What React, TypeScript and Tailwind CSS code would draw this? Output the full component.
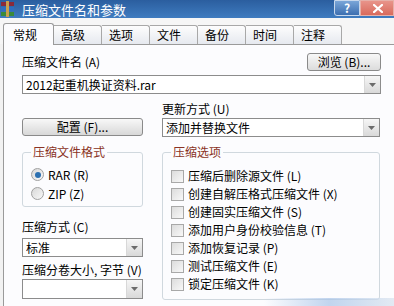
import React from 'react';

const tabs = ['常规', '高级', '选项', '文件', '备份', '时间', '注释'];

const options = [
    '压缩后删除源文件 (L)',
    '创建自解压格式压缩文件 (X)',
    '创建固实压缩文件 (S)',
    '添加用户身份校验信息 (T)',
    '添加恢复记录 (P)',
    '测试压缩文件 (E)',
    '锁定压缩文件 (K)'
];

function DropArrow() {
    return (
        <div className="flex h-full w-[16px] items-center justify-center border-l border-[#d8d8d8] bg-gradient-to-b from-[#f6f6f6] to-[#d9d9d9]">
            <svg width="7" height="4" viewBox="0 0 7 4">
                <path d="M0 0h7L3.5 4z" fill="#6b6b6b" />
            </svg>
        </div>
    );
}

function Combo({ value, className }: { value: string; className: string }) {
    return (
        <div className={`flex items-center border border-[#8c8c8c] bg-white pl-[3px] ${className}`}>
            <span className="flex-1 truncate text-[12px] text-black">{value}</span>
            <DropArrow />
        </div>
    );
}

function Check({ label }: { label: string }) {
    return (
        <div className="flex h-[18px] items-center gap-[4px]">
            <span className="h-[13px] w-[13px] border border-[#a8a8a8] bg-gradient-to-br from-[#dcdcdc] to-[#f8f8f8]" />
            <span className="text-[12px] text-black">{label}</span>
        </div>
    );
}

function Radio({ label, on }: { label: string; on?: boolean }) {
    return (
        <div className="flex h-[19px] items-center gap-[4px]">
            <span className="flex h-[13px] w-[13px] items-center justify-center rounded-full border border-[#a0a0a0] bg-gradient-to-br from-[#d8d8d8] to-[#f8f8f8]">
                {on && <span className="h-[6px] w-[6px] rounded-full bg-[#2b6fb0]" />}
            </span>
            <span className="text-[12px] text-black">{label}</span>
        </div>
    );
}

export default function App() {
    return (
        <div
            className="relative h-[306px] w-[394px] overflow-hidden bg-[#f2f2f2] select-none"
            style={{ fontFamily: '"Noto Sans CJK SC", "Liberation Sans", sans-serif' }}
        >
            {/* Title bar */}
            <div className="flex h-[18px] items-center bg-gradient-to-b from-[#2b5e9f] to-[#3f7cc0]">
                <svg width="16" height="16" viewBox="0 0 16 16">
                    <rect x="1" y="1" width="13" height="4" fill="#8b2a3a" />
                    <rect x="1" y="6" width="13" height="4" fill="#2f6ec0" />
                    <rect x="1" y="11" width="13" height="4" fill="#3a8a3a" />
                    <rect x="6" y="0" width="3" height="16" fill="#c8a050" />
                </svg>
                <span className="ml-[6px] text-[13px] leading-none text-white">压缩文件名和参数</span>
                <div className="ml-auto flex h-[16px] self-start">
                    <div className="flex w-[26px] items-center justify-center rounded-bl-[3px] border border-[#c8d8ec] bg-gradient-to-b from-[#7aa6d8] to-[#3d6fb0] text-[12px] font-bold leading-none text-white">
                        ?
                    </div>
                    <div className="flex w-[34px] items-center justify-start border border-[#e6b0a8] bg-gradient-to-b from-[#e8948a] to-[#d86a5c] pl-[12px]">
                        <svg width="10" height="9" viewBox="0 0 10 9">
                            <path d="M1 1l8 7M9 1L1 8" stroke="#fff" strokeWidth="2.2" strokeLinecap="square" />
                        </svg>
                    </div>
                </div>
            </div>

            {/* Tabs */}
            <div className="flex h-[26px] items-end bg-[#f6f6f6] pl-[3px]">
                {tabs.map((t, i) => (
                    <div
                        key={t}
                        className={
                            i === 0
                                ? 'relative z-10 -mb-px flex h-[22px] w-[51px] items-center rounded-t-[3px] border border-b-0 border-[#9a9a9a] bg-[#fcfcfe] pl-[9px] text-[12px] text-black'
                                : 'flex h-[19px] w-[48px] items-center rounded-tr-[3px] border border-b-0 border-l-0 border-[#a8a8a8] bg-gradient-to-b from-[#fdfdfd] to-[#e6e9ef] pl-[7px] text-[12px] text-black'
                        }
                    >
                        {t}
                    </div>
                ))}
            </div>

            {/* Panel */}
            <div className="ml-[3px] h-[262px] border-l border-t border-[#9a9a9a] bg-[#fcfcfe] pl-[18px] pr-[13px]">
                <div className="mt-[8px] flex h-[18px] items-center justify-between">
                    <span className="text-[12px] text-black">压缩文件名 (A)</span>
                    <div className="flex h-[18px] w-[74px] items-center justify-center rounded-[3px] border border-[#8a8a8a] bg-gradient-to-b from-[#f8f8f8] to-[#dcdcdc] text-[12px] text-black">
                        浏览 (B)...
                    </div>
                </div>
                <Combo value="2012起重机换证资料.rar" className="mt-[4px] h-[19px] w-[359px]" />

                <div className="mt-[5px] grid grid-cols-[121px_218px] gap-x-[19px]">
                    {/* Left column */}
                    <div className="flex flex-col">
                        <div className="h-[19px]" />
                        <div className="flex h-[18px] items-center justify-center rounded-[3px] border border-[#8a8a8a] bg-gradient-to-b from-[#f8f8f8] to-[#d8d8d8] text-[12px] text-black">
                            配置 (F)...
                        </div>
                        <fieldset className="mt-[9px] h-[62px] rounded-[3px] border border-[#d0d8de] pl-[8px] pr-[4px] pt-[6px]">
                            <legend className="px-[2px] text-[12px] leading-[14px] text-[#8a3324]">压缩文件格式</legend>
                            <Radio label="RAR (R)" on />
                            <Radio label="ZIP (Z)" />
                        </fieldset>
                        <span className="mt-[12px] text-[12px] leading-[16px] text-black">压缩方式 (C)</span>
                        <Combo value="标准" className="mt-[3px] h-[19px]" />
                        <span className="mt-[5px] text-[12px] leading-[16px] text-black">压缩分卷大小, 字节 (V)</span>
                        <Combo value="" className="mt-[1px] h-[20px]" />
                    </div>

                    {/* Right column */}
                    <div className="flex flex-col">
                        <span className="h-[19px] text-[12px] leading-[19px] text-black">更新方式 (U)</span>
                        <Combo value="添加并替换文件" className="h-[19px]" />
                        <fieldset className="mt-[8px] h-[155px] rounded-[3px] border border-[#d0d8de] pl-[8px] pt-[8px]">
                            <legend className="px-[2px] text-[12px] leading-[14px] text-[#8a3324]">压缩选项</legend>
                            {options.map((o) => (
                                <Check key={o} label={o} />
                            ))}
                        </fieldset>
                    </div>
                </div>
            </div>

            {/* blurred button glow at the bottom edge */}
            <div className="absolute bottom-0 right-0 h-[8px] w-[130px] bg-gradient-to-r from-transparent via-[#a8c4e8] to-[#d8e2ee] opacity-70" />
        </div>
    );
}
